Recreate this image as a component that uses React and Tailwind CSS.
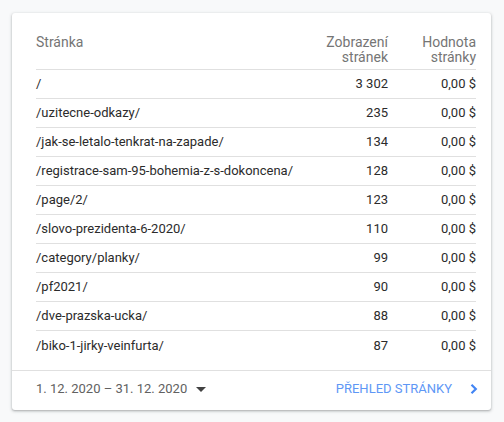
import React from "react";

const rows = [
    ["/", "3 302"],
    ["/uzitecne-odkazy/", "235"],
    ["/jak-se-letalo-tenkrat-na-zapade/", "134"],
    ["/registrace-sam-95-bohemia-z-s-dokoncena/", "128"],
    ["/page/2/", "123"],
    ["/slovo-prezidenta-6-2020/", "110"],
    ["/category/planky/", "99"],
    ["/pf2021/", "90"],
    ["/dve-prazska-ucka/", "88"],
    ["/biko-1-jirky-veinfurta/", "87"],
];

const App = () => {
    return (
        <div className="min-h-[422px] w-[504px] bg-[#f8f9fa] pt-[13px] pl-[12px] font-['Roboto',sans-serif]">
            <div className="w-[479px] h-[397px] bg-white rounded-[3px] shadow-[0_1px_2px_rgba(60,64,67,0.3),0_1px_3px_1px_rgba(60,64,67,0.12)] flex flex-col">
                <div className="pl-6 pr-[15px] pt-[22px] flex-1">
                    <div className="grid grid-cols-[minmax(0,1fr)_100px_88px] text-[14px] leading-[15px] text-[#757575] border-b border-[#e0e0e0] pb-[4px]">
                        <div>Stránka</div>
                        <div className="text-right">Zobrazení<br />stránek</div>
                        <div className="text-right">Hodnota<br />stránky</div>
                    </div>
                    {rows.map((row, index) => (
                        <div
                            key={index}
                            className={"grid grid-cols-[minmax(0,1fr)_100px_88px] h-[29px] items-center text-[13px] text-[#2b2b2b] " + (index < rows.length - 1 ? "border-b border-[#e0e0e0]" : "")}
                        >
                            <div className="whitespace-nowrap">{row[0]}</div>
                            <div className="text-right">{row[1]}</div>
                            <div className="text-right">0,00 $</div>
                        </div>
                    ))}
                </div>
                <div className="h-[40px] border-t border-[#e0e0e0] flex items-center justify-between pl-6 pr-[13px] pb-[3px]">
                    <div className="flex items-center text-[13px] text-[#616161]">
                        <span>1. 12. 2020 – 31. 12. 2020</span>
                        <svg width="10" height="5" viewBox="0 0 10 5" className="ml-[9px]">
                            <path d="M0 0 L10 0 L5 5 Z" fill="#424242" />
                        </svg>
                    </div>
                    <div className="flex items-center text-[13px] text-[#5e97f6]">
                        <span>PŘEHLED STRÁNKY</span>
                        <svg width="8" height="10" viewBox="0 0 8 10" className="ml-[18px]">
                            <path d="M1.5 0.8 L5.8 5 L1.5 9.2" stroke="#4285f4" strokeWidth="2.2" fill="none" />
                        </svg>
                    </div>
                </div>
            </div>
        </div>
    );
}

export default App;
